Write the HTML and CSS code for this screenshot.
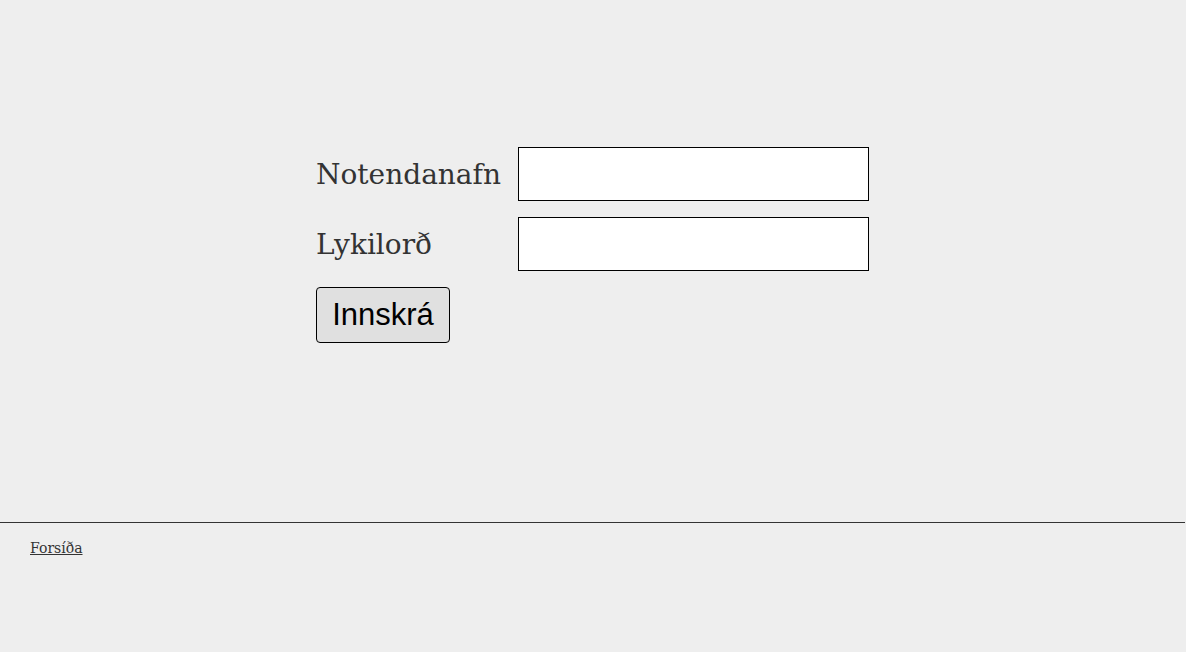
FILE: index.html
```html
<!DOCTYPE html>
<html lang="is">
<head>
<meta charset="utf-8">
<title>Innskráning</title>
<link rel="stylesheet" href="styles.css">
</head>
<body>
<div class="page">
  <main class="main">
    <form class="login">
      <label class="label" for="user">Notendanafn</label>
      <input class="field" id="user" type="text">
      <label class="label" for="pass">Lykilorð</label>
      <input class="field" id="pass" type="password">
      <button class="btn" type="button">Innskrá</button>
    </form>
  </main>
  <footer class="footer">
    <a class="link" href="#">Forsíða</a>
  </footer>
</div>
</body>
</html>
```
FILE: styles.css
```css
html, body {
  margin: 0;
  padding: 0;
  background: #eeeeee;
}
body {
  font-family: "DejaVu Serif", Georgia, serif;
  color: #333333;
  height: 652px;
  overflow: hidden;
}
.page {
  width: 1185px;
}
.main {
  height: 522px;
  box-sizing: border-box;
  padding-top: 147px;
  display: flex;
  justify-content: center;
}
.login {
  display: grid;
  grid-template-columns: 186px 351px;
  column-gap: 16px;
  row-gap: 16px;
  align-items: center;
  align-content: start;
}
.label {
  font-size: 28px;
  color: #333333;
  white-space: nowrap;
}
.field {
  box-sizing: border-box;
  width: 351px;
  height: 54px;
  border: 1px solid #000000;
  background: #ffffff;
  margin: 0;
  padding: 0 8px;
  font-size: 24px;
}
.btn {
  grid-column: 1;
  justify-self: start;
  box-sizing: border-box;
  width: 134px;
  height: 56px;
  margin: 0;
  padding: 0;
  font-family: "Liberation Sans", Arial, sans-serif;
  font-size: 31px;
  color: #000000;
  background: #e0e0e0;
  border: 1px solid #000000;
  border-radius: 4px;
}
.footer {
  border-top: 1px solid #333333;
  padding: 15px 30px 0;
}
.link {
  font-family: "DejaVu Serif", Georgia, serif;
  font-size: 14px;
  color: #333333;
  text-decoration: underline;
}
```
